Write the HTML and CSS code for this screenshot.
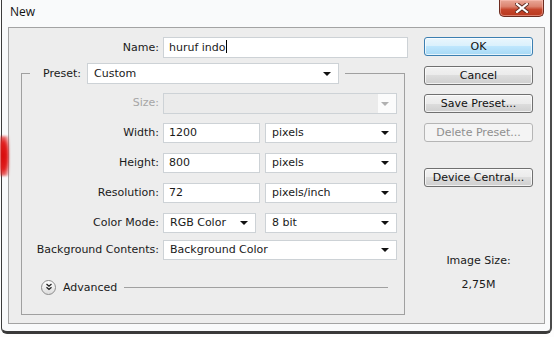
FILE: index.html
```html
<!DOCTYPE html>
<html lang="en">
<head>
  <meta charset="UTF-8">
  <title>New</title>
  <link rel="stylesheet" href="styles.css">
</head>
<body>
  <div class="window">
    <div class="titlebar">
      <span class="title">New</span>
      <button class="close-button">
        <svg width="14" height="10" viewBox="0 0 14 10">
          <path d="M2 1l10 8M12 1L2 9" stroke="#5a2a20" stroke-width="4" stroke-linecap="square"/>
          <path d="M2 1l10 8M12 1L2 9" stroke="#fff" stroke-width="2.2" stroke-linecap="square"/>
        </svg>
      </button>
    </div>

    <div class="client">
      <div class="main">
        <div class="name-row">
          <span class="label">Name:</span>
          <div class="field name-field">huruf indo<span class="caret"></span></div>
        </div>

        <fieldset class="preset-group">
          <legend class="preset-legend">
            <span>Preset:</span>
            <div class="select preset-select">Custom</div>
          </legend>

          <div class="rows">
            <span class="label disabled">Size:</span>
            <div class="select size-select disabled"></div>

            <span class="label">Width:</span>
            <div class="pair">
              <div class="field num-field">1200</div>
              <div class="select unit-select">pixels</div>
            </div>

            <span class="label">Height:</span>
            <div class="pair">
              <div class="field num-field">800</div>
              <div class="select unit-select">pixels</div>
            </div>

            <span class="label">Resolution:</span>
            <div class="pair">
              <div class="field num-field">72</div>
              <div class="select unit-select">pixels/inch</div>
            </div>

            <span class="label">Color Mode:</span>
            <div class="pair mode-pair">
              <div class="select mode-select">RGB Color</div>
              <div class="select unit-select">8 bit</div>
            </div>

            <span class="label">Background Contents:</span>
            <div class="select">Background Color</div>
          </div>

          <div class="advanced">
            <span class="advanced-toggle">
              <svg width="8" height="8" viewBox="0 0 8 8">
                <path d="M1.5 1l2.5 2.2L6.5 1M1.5 4.3l2.5 2.2 2.5-2.2" fill="none" stroke="#222" stroke-width="1.3"/>
              </svg>
            </span>
            <span>Advanced</span>
            <span class="advanced-line"></span>
          </div>
        </fieldset>
      </div>

      <div class="side">
        <button class="btn default">OK</button>
        <button class="btn">Cancel</button>
        <button class="btn">Save Preset...</button>
        <button class="btn" disabled>Delete Preset...</button>
        <button class="btn device">Device Central...</button>

        <div class="image-size">
          <div>Image Size:</div>
          <div class="image-size-value">2,75M</div>
        </div>
      </div>
    </div>
  </div>
</body>
</html>
```

FILE: styles.css
```css
* {
  margin: 0;
  padding: 0;
  box-sizing: border-box;
}

body {
  font-family: "DejaVu Sans", Verdana, sans-serif;
  font-size: 11px;
  color: #1a1a1a;
  background: #fdfdfd;
}

.window {
  position: relative;
  width: 551px;
  margin-left: 1px;
  background: #f9fafb;
  border-left: 1px solid #3c3c3c;
  border-right: 2px solid #4a4a4a;
  border-bottom: 3px solid #3a3a3a;
  border-radius: 0 0 6px 6px;
}

/* glow of the red window behind the glass frame */
.window::before {
  content: "";
  position: absolute;
  left: -2px;
  top: 136px;
  width: 9px;
  height: 40px;
  background: radial-gradient(ellipse at 35% 50%, #d80808 0%, #e02020 50%, rgba(240, 80, 80, 0) 100%);
  filter: blur(1px);
}

.titlebar {
  height: 26px;
  display: flex;
  align-items: flex-start;
  justify-content: space-between;
  padding-left: 8px;
  padding-right: 6px;
}

.title {
  font-family: "Open Sans", sans-serif;
  font-size: 12px;
  line-height: 14px;
  margin-top: 5px;
  color: #111;
}

.close-button {
  width: 45px;
  height: 17px;
  border: 1px solid #6d2c20;
  border-top: none;
  border-radius: 0 0 5px 5px;
  background: linear-gradient(#e9a898 0%, #dc8470 40%, #c5452b 60%, #b8391f 100%);
  box-shadow: inset 0 0 0 1px rgba(255, 200, 190, 0.5);
  display: flex;
  align-items: center;
  justify-content: center;
}

.client {
  display: flex;
  height: 297px;
  margin: 1px 5px 7px 6px;
  background: #ededed;
  border: 1px solid #a3a3a3;
  padding-top: 9px;
}

.main {
  width: 400px;
}

.label {
  text-align: right;
  line-height: 20px;
  white-space: nowrap;
}

.disabled {
  color: #a6a6a6;
}

.name-row {
  display: flex;
  gap: 4px;
}

.name-row .label {
  width: 150px;
  line-height: 21px;
}

.field {
  height: 20px;
  line-height: 18px;
  padding: 0 5px;
  background: #fff;
  border: 1px solid #cdd2d6;
  white-space: nowrap;
}

.name-field {
  width: 245px;
  height: 21px;
  line-height: 19px;
}

.caret {
  display: inline-block;
  width: 1px;
  height: 13px;
  background: #000;
  vertical-align: -2px;
}

.select {
  height: 20px;
  line-height: 18px;
  padding: 0 6px;
  background: #fff;
  border: 1px solid #cdd2d6;
  display: flex;
  justify-content: space-between;
  align-items: center;
  white-space: nowrap;
}

.select::after {
  content: "";
  margin-left: auto;
  border-left: 4px solid transparent;
  border-right: 4px solid transparent;
  border-top: 4px solid #111;
  margin-right: 1px;
}

.select.disabled {
  height: 21px;
  background: linear-gradient(to right, #ebebeb calc(100% - 18px), #fbfbfb 0);
}

.select.disabled::after {
  border-top-color: #b0b0b0;
}

.preset-group {
  margin: 5px 0 0 12px;
  width: 384px;
  border: 1px solid #a0a0a0;
  padding: 9px 6px 18px 0;
}

.preset-legend {
  margin-left: 8px;
  padding: 0 6px 0 13px;
  display: flex;
  align-items: center;
  gap: 6px;
}

.preset-select {
  width: 252px;
  height: 21px;
  line-height: 19px;
}

.rows {
  display: grid;
  grid-template-columns: 137px 234px;
  grid-template-rows: 30px 30px 30px 30px 27px 21px;
  column-gap: 4px;
  align-items: start;
}

.pair {
  display: flex;
  justify-content: space-between;
}

.num-field {
  width: 97px;
}

.unit-select {
  width: 132px;
}

.mode-select {
  width: 93px;
}

.advanced {
  display: flex;
  align-items: center;
  gap: 7px;
  height: 18px;
  margin: 17px 10px 0 19px;
}

.advanced-toggle {
  width: 15px;
  height: 15px;
  border-radius: 50%;
  border: 1px solid #8c8c8c;
  background: linear-gradient(#ffffff, #dcdcdc);
  display: flex;
  align-items: center;
  justify-content: center;
}

.advanced-line {
  flex: 1;
  height: 1px;
  background: #a0a0a0;
}

.side {
  width: 109px;
  margin-left: 15px;
  display: flex;
  flex-direction: column;
}

.btn {
  font-family: inherit;
  font-size: 11px;
  color: #111;
  height: 19px;
  margin-bottom: 9.5px;
  border: 1px solid #707070;
  border-radius: 3px;
  background: linear-gradient(#f2f2f2 0%, #ebebeb 50%, #dddddd 50%, #cfcfcf 100%);
  box-shadow: inset 0 0 0 1px rgba(255, 255, 255, 0.7);
}

.btn.default {
  border-color: #3c7fb1;
  background: linear-gradient(#eaf6fd 0%, #d9f0fc 50%, #bee6fd 50%, #a7d9f5 100%);
}

.btn:disabled {
  color: #8f8f8f;
  border-color: #b5b5b5;
  background: #f4f4f4;
  box-shadow: none;
}

.btn.device {
  margin-top: 17px;
}

.image-size {
  margin-top: 57px;
  text-align: center;
  line-height: 14px;
}

.image-size-value {
  margin-top: 10px;
}
```
